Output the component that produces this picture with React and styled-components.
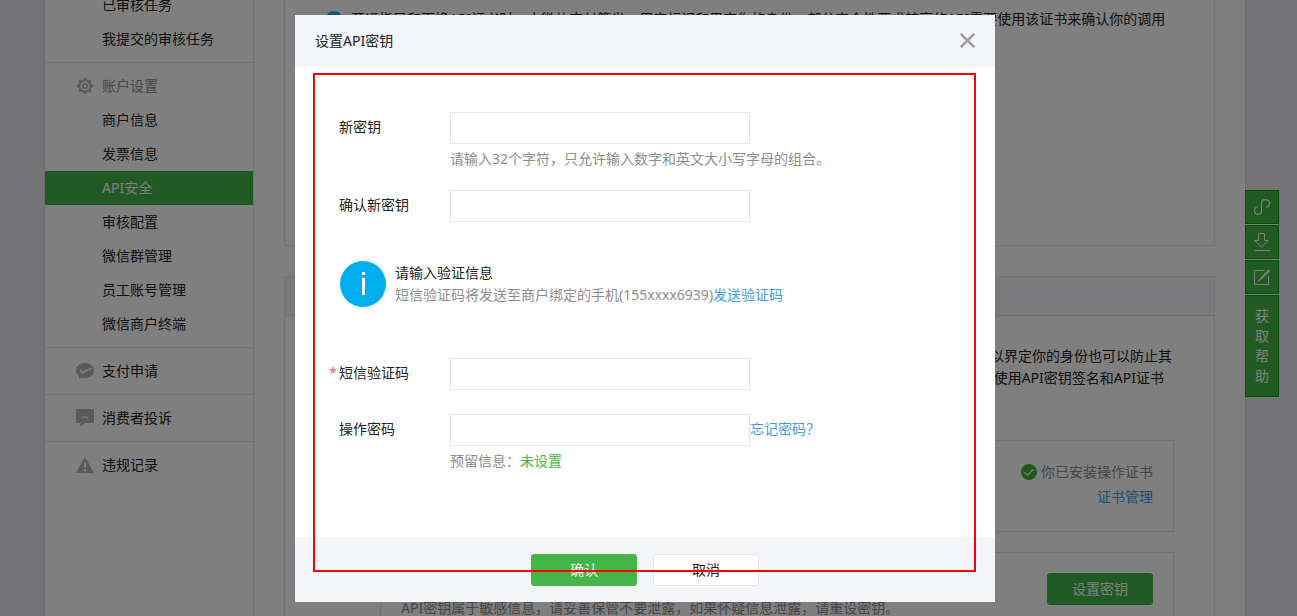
import React from "react";
import styled, { createGlobalStyle, css } from "styled-components";

const c = {
  green: "#44b549",
  blue: "#459ae9",
  text: "#222222",
  muted: "#8d8d8d",
  line: "#e7e7eb",
  panel: "#f4f5f9",
};

const Global = createGlobalStyle`
  *, *::before, *::after { box-sizing: border-box; }
  html, body { margin: 0; height: 100%; overflow: hidden; }
  body {
    background: #e7e7eb;
    color: ${c.text};
    font: 14px/22px "Noto Sans", "Noto Sans CJK SC", sans-serif;
  }
  button, input { font: inherit; }
  button { cursor: pointer; }
  p, h2, ul { margin: 0; padding: 0; }
`;

const Page = styled.div`
  height: 100vh;
  padding-right: 7px;
  overflow: hidden;
`;

const Shell = styled.div`
  display: flex;
  max-width: 1202px;
  min-height: 100%;
  margin: 0 auto;
  background: #fff;
  border: solid #d9dadc;
  border-width: 0 1px;
`;

const Sidebar = styled.nav`
  flex: 0 0 209px;
  border-right: 1px solid ${c.line};
  margin-top: -12px;
`;

const Group = styled.ul`
  list-style: none;
  padding: 0 0 6px;
  & + & {
    border-top: 1px solid ${c.line};
    padding-top: 6px;
  }
`;

const NavLink = styled.a`
  display: flex;
  align-items: center;
  height: 34px;
  padding-left: 31px;
  color: ${c.text};
  text-decoration: none;
  ${(p) => p.$heading && css`color: ${c.muted};`}
  ${(p) => p.$active && css`background: ${c.green}; color: #fff;`}
`;

const IconSlot = styled.span`
  display: flex;
  flex: 0 0 26px;
  svg { display: block; }
`;

const Main = styled.main`
  flex: 1;
  min-width: 0;
  padding: 0 30px;
`;

const Card = styled.section`
  border: 1px solid ${c.line};
  ${(p) => p.$continued && css`border-top: 0; height: 246px; padding: 8px 41px;`}
  & + & { margin-top: 30px; height: 420px; }
`;

const Notice = styled.p`
  display: flex;
  align-items: center;
  gap: 9px;
  white-space: nowrap;
  svg { flex: none; }
`;

const CardHead = styled.div`
  height: 39px;
  background: ${c.panel};
  border-bottom: 1px solid #d9dce4;
`;

const CardBody = styled.div`
  padding: 29px 40px 0 95px;
`;

const Summary = styled.div`
  height: 95px;
  text-align: right;
`;

const SummaryLine = styled.p`
  padding-right: ${(p) => (p.$short ? 10 : 2)}px;
`;

const Box = styled.div`
  display: flex;
  flex-direction: column;
  align-items: flex-end;
  height: 92px;
  margin-bottom: 20px;
  padding: 20px;
  border: 1px solid ${c.line};
`;

const Status = styled.p`
  display: flex;
  align-items: center;
  gap: 4px;
  margin-bottom: 3px;
  color: ${c.muted};
`;

const Note = styled.p`
  align-self: flex-start;
  margin-top: -8px;
  color: ${c.muted};
`;

const Link = styled.a`
  color: ${(p) => (p.$green ? c.green : c.blue)};
  text-decoration: none;
`;

const Button = styled.button`
  flex: none;
  width: 106px;
  height: 32px;
  padding: 0;
  border: 1px solid ${(p) => (p.$plain ? c.line : c.green)};
  border-radius: 3px;
  background: ${(p) => (p.$plain ? "#fff" : c.green)};
  color: ${(p) => (p.$plain ? c.text : "#fff")};
`;

const Tools = styled.aside`
  position: fixed;
  top: 190px;
  right: 18px;
  display: flex;
  flex-direction: column;
  gap: 1px;
  width: 34px;
  background: #fff;
`;

const Tool = styled.button`
  display: flex;
  align-items: center;
  justify-content: center;
  height: ${(p) => (p.$tall ? 102 : 34)}px;
  padding: 0 9px;
  border: 1px solid #00a006;
  background: ${c.green};
  color: #fff;
  line-height: 20px;
  svg { flex: none; }
`;

const Overlay = styled.div`
  position: fixed;
  inset: 0;
  display: flex;
  justify-content: center;
  align-items: flex-start;
  padding: 15px 7px 0 0;
  background: rgba(0, 0, 0, 0.5);
`;

const Dialog = styled.div`
  position: relative;
  width: 700px;
  background: #fff;
`;

const DialogHead = styled.header`
  display: flex;
  align-items: center;
  justify-content: space-between;
  height: 52px;
  padding: 0 20px;
  background: ${c.panel};
`;

const DialogTitle = styled.h2`
  font-size: 14px;
  font-weight: 400;
`;

const Close = styled.button`
  display: flex;
  padding: 0 0 1px;
  border: 0;
  background: none;
`;

const Form = styled.form`
  padding: 45px 34px;
`;

const Field = styled.div`
  display: flex;
  margin-bottom: 24px;
`;

const Label = styled.label`
  display: flex;
  flex: 0 0 121px;
  line-height: 30px;
`;

const Star = styled.span`
  flex: 0 0 10px;
  color: #e15f63;
`;

const InputLine = styled.div`
  display: flex;
  align-items: flex-start;
  line-height: 30px;
`;

const Input = styled.input`
  width: 300px;
  height: 32px;
  padding: 0 10px;
  border: 1px solid ${c.line};
  border-radius: 0;
  background: #fff;
  outline: 0;
`;

const Hint = styled.p`
  margin: 4px 0 -4px;
  color: ${c.muted};
`;

const Verify = styled.div`
  display: flex;
  align-items: center;
  gap: 9px;
  margin: 39px 0 51px;
  padding-left: 11px;
`;

const VerifyText = styled.p`
  color: ${(p) => (p.$muted ? c.muted : c.text)};
`;

const DialogFoot = styled.footer`
  display: flex;
  justify-content: center;
  gap: 16px;
  padding: 17px 0 16px;
  background: ${c.panel};
`;

const Highlight = styled.div`
  position: absolute;
  inset: 58px 19px 30px 18px;
  border: 2px solid #ff0000;
  pointer-events: none;
`;

const teeth = [0, 45, 90, 135, 180, 225, 270, 315];

const GearIcon = () => (
  <svg width="18" height="18" viewBox="0 0 18 18" fill="none" stroke="#b4b4b4">
    <circle cx="9" cy="9" r="5.6" strokeWidth="1.8" />
    <circle cx="9" cy="9" r="2.3" strokeWidth="1.6" />
    {teeth.map((a) => (
      <path key={a} d="M9 1V3" strokeWidth="2.8" transform={`rotate(${a} 9 9)`} />
    ))}
  </svg>
);

const PayIcon = () => (
  <svg width="18" height="18" viewBox="0 0 18 18">
    <path fill="#b4b4b4" d="M9 1C4 1 0 4.300 0 8.600c0 2.300 1.200 4.300 3.100 5.700L3 17l2.800-1.500c1 .3 2.100.5 3.200.5 5 0 9-3.200 9-7.400S14 1 9 1z" />
    <path fill="none" stroke="#fff" strokeWidth="1.800" d="M4.300 7.800l2.200 3L15.500 6" />
  </svg>
);

const ComplaintIcon = () => (
  <svg width="18" height="18" viewBox="0 0 18 18">
    <path fill="#b4b4b4" d="M0 0h18v12.500a1.500 1.500 0 0 1-1.500 1.500H9l-4.500 4V14h-3A1.500 1.500 0 0 1 0 12.500z" />
    <path fill="none" stroke="#fff" strokeWidth="1.100" d="M5.800 9.200c1.500-1.800 4.900-1.800 6.400 0" />
  </svg>
);

const WarningIcon = () => (
  <svg width="18" height="18" viewBox="0 0 18 18">
    <path fill="#b4b4b4" d="M9 1l9 16H0z" />
    <path stroke="#fff" strokeWidth="2" d="M9 6.500V12M9 13.200v2" />
  </svg>
);

const InfoIcon = ({ size }) => (
  <svg width={size} height={size} viewBox="0 0 46 46">
    <circle cx="23" cy="23" r="23" fill="#00aeef" />
    <path stroke="#fff" strokeWidth="3" d="M23.500 11v3M23.500 17v17" />
  </svg>
);

const CheckIcon = () => (
  <svg width="16" height="16" viewBox="0 0 16 16">
    <circle cx="8" cy="8" r="8" fill="#44b537" />
    <path fill="none" stroke="#fff" strokeWidth="1.300" d="M3.500 8.200l3 3 6-6" />
  </svg>
);

const CloseIcon = () => (
  <svg width="15" height="15" viewBox="0 0 15 15" stroke="#9c9c9f" strokeWidth="2.400">
    <path d="M.8.800l13.400 13.400M14.200.8L.8 14.200" />
  </svg>
);

const ProgramIcon = () => (
  <svg width="16" height="16" viewBox="0 0 16 16" fill="none" stroke="#fff" strokeWidth="1.200">
    <path d="M4 7.500C2 8 .6 9.400.6 11.500c0 2.300 1.500 3.900 3.500 3.900s3.400-1.500 3.400-3.600V4.300C7.500 2.100 9.200.6 11.400.6s4 1.600 4 3.700-1.300 3.600-3.500 4.200" />
  </svg>
);

const DownloadIcon = () => (
  <svg width="16" height="18" viewBox="0 0 16 18" fill="none" stroke="#fff">
    <path d="M4.500.5h6v7h4L7.500 14 .5 7.500h4zM0 17.500h16" />
  </svg>
);

const EditIcon = () => (
  <svg width="16" height="17" viewBox="0 0 16 17" fill="none" stroke="#fff">
    <path d="M10.500 1.500H.5v14h14V7" />
    <path strokeWidth="2" d="M15.500 1L7 9.500" />
    <path d="M6.500 9.500l-2 2.500M7 9.500l-2.500 2" />
  </svg>
);

const groups = [
  [{ text: "已审核任务" }, { text: "我提交的审核任务" }],
  [
    { text: "账户设置", Icon: GearIcon, heading: true },
    { text: "商户信息" },
    { text: "发票信息" },
    { text: "API安全", active: true },
    { text: "审核配置" },
    { text: "微信群管理" },
    { text: "员工账号管理" },
    { text: "微信商户终端" },
  ],
  [{ text: "支付申请", Icon: PayIcon }],
  [{ text: "消费者投诉", Icon: ComplaintIcon }],
  [{ text: "违规记录", Icon: WarningIcon }],
];

function FormField({ id, label, required, type = "text", after, hint }) {
  return (
    <Field>
      <Label htmlFor={id}>
        <Star>{required ? "*" : ""}</Star>
        {label}
      </Label>
      <div>
        <InputLine>
          <Input id={id} type={type} />
          {after}
        </InputLine>
        {hint && <Hint>{hint}</Hint>}
      </div>
    </Field>
  );
}

export default function App() {
  return (
    <>
      <Global />
      <Page>
        <Shell>
          <Sidebar>
            {groups.map((items) => (
              <Group key={items[0].text}>
                {items.map(({ text, Icon, heading, active }) => (
                  <li key={text}>
                    <NavLink href="#" $heading={heading} $active={active}>
                      <IconSlot>{Icon && <Icon />}</IconSlot>
                      {text}
                    </NavLink>
                  </li>
                ))}
              </Group>
            ))}
          </Sidebar>
          <Main>
            <Card $continued>
              <Notice>
                <InfoIcon size={16} />
                开通指导和更换API证书时，由微信支付签发，用来标识和界定你的身份。部分安全性要求较高的API需要使用该证书来确认你的调用
              </Notice>
            </Card>
            <Card>
              <CardHead />
              <CardBody>
                <Summary>
                  <SummaryLine>以界定你的身份也可以防止其</SummaryLine>
                  <SummaryLine $short>使用API密钥签名和API证书</SummaryLine>
                </Summary>
                <Box>
                  <Status>
                    <CheckIcon />
                    你已安装操作证书
                  </Status>
                  <Link href="#">证书管理</Link>
                </Box>
                <Box>
                  <Button type="button">设置密钥</Button>
                  <Note>API密钥属于敏感信息，请妥善保管不要泄露，如果怀疑信息泄露，请重设密钥。</Note>
                </Box>
              </CardBody>
            </Card>
          </Main>
        </Shell>
      </Page>

      <Tools>
        <Tool type="button" aria-label="小程序"><ProgramIcon /></Tool>
        <Tool type="button" aria-label="下载"><DownloadIcon /></Tool>
        <Tool type="button" aria-label="反馈"><EditIcon /></Tool>
        <Tool type="button" $tall>获取帮助</Tool>
      </Tools>

      <Overlay>
        <Dialog role="dialog" aria-labelledby="dialog-title">
          <DialogHead>
            <DialogTitle id="dialog-title">设置API密钥</DialogTitle>
            <Close type="button" aria-label="关闭"><CloseIcon /></Close>
          </DialogHead>
          <Form>
            <FormField
              id="new-key"
              label="新密钥"
              hint="请输入32个字符，只允许输入数字和英文大小写字母的组合。"
            />
            <FormField id="confirm-key" label="确认新密钥" />
            <Verify>
              <InfoIcon size={46} />
              <div>
                <VerifyText>请输入验证信息</VerifyText>
                <VerifyText $muted>
                  短信验证码将发送至商户绑定的手机(155xxxx6939)<Link href="#">发送验证码</Link>
                </VerifyText>
              </div>
            </Verify>
            <FormField id="sms-code" label="短信验证码" required />
            <FormField
              id="password"
              type="password"
              label="操作密码"
              after={<Link href="#">忘记密码？</Link>}
              hint={<>预留信息：<Link href="#" $green>未设置</Link></>}
            />
          </Form>
          <DialogFoot>
            <Button type="button">确认</Button>
            <Button type="button" $plain>取消</Button>
          </DialogFoot>
          <Highlight />
        </Dialog>
      </Overlay>
    </>
  );
}
